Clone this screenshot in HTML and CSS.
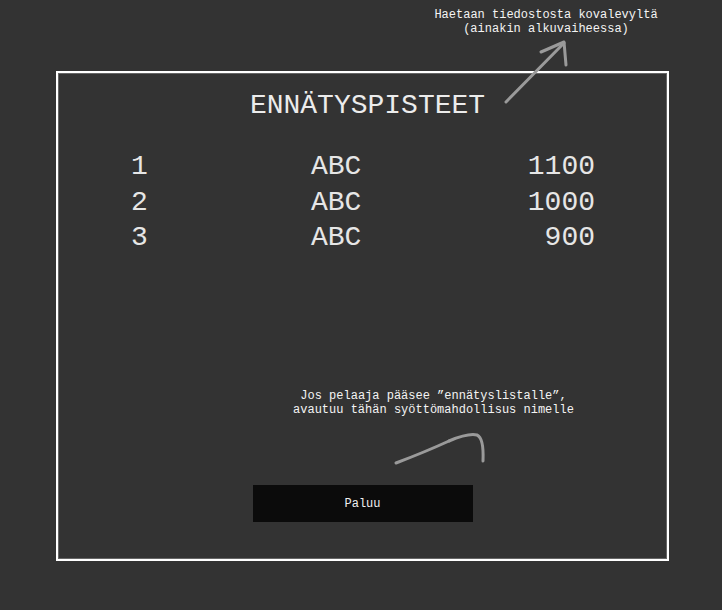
FILE: index.html
```html
<!DOCTYPE html>
<html lang="fi">
<head>
<meta charset="utf-8">
<title>Ennätyspisteet</title>
<link rel="stylesheet" href="styles.css">
</head>
<body>
<div class="page">
  <div class="top">
    <p class="note note-top">Haetaan tiedostosta kovalevyltä<br>(ainakin alkuvaiheessa)</p>
  </div>
  <main class="frame">
    <h1 class="title">ENNÄTYSPISTEET</h1>
    <div class="scores">
      <span class="rank">1</span><span class="name">ABC</span><span class="score">1100</span>
      <span class="rank">2</span><span class="name">ABC</span><span class="score">1000</span>
      <span class="rank">3</span><span class="name">ABC</span><span class="score">900</span>
    </div>
    <p class="note note-entry">Jos pelaaja pääsee ”ennätyslistalle”,<br>avautuu tähän syöttömahdollisus nimelle</p>
    <button class="back">Paluu</button>
  </main>
  <svg class="arrows" width="722" height="610" viewBox="0 0 722 610">
    <path d="M506 102 L564 43" />
    <path d="M541 52 L564 42 L566 65" />
    <path d="M396 463 Q425 452 449 441" />
    <path d="M449 441 Q468 433 477 435 Q484 438 483 461" />
  </svg>
</div>
</body>
</html>
```
FILE: styles.css
```css
html, body {
  margin: 0;
  padding: 0;
  background: #333333;
}
.page {
  position: relative;
  width: 722px;
  height: 610px;
  overflow: hidden;
  font-family: "Liberation Mono", "Courier New", monospace;
  color: #f2f2f2;
}
.top {
  height: 71px;
  box-sizing: border-box;
  padding-top: 8px;
  padding-left: 416px;
}
.note {
  margin: 0;
  font-size: 12px;
  line-height: 14px;
  text-align: center;
  color: #f4f4f4;
  white-space: nowrap;
}
.note-top {
  width: 260px;
}
.frame {
  margin-left: 56px;
  width: 613px;
  height: 490px;
  box-sizing: border-box;
  border: 2px solid #ffffff;
  box-shadow: inset 0 0 0 1px rgba(255,255,255,0.25);
  display: flex;
  flex-direction: column;
  align-items: center;
}
.title {
  margin: 16px 0 0 10px;
  font-weight: normal;
  font-size: 28px;
  line-height: 34px;
  color: #ececec;
}
.scores {
  margin-top: 26px;
  align-self: flex-start;
  margin-left: 73px;
  width: 464px;
  display: grid;
  grid-template-columns: 180px 1fr auto;
  font-size: 28px;
  line-height: 35.7px;
  color: #e6e6e6;
}
.score {
  text-align: right;
}
.note-entry {
  margin-top: 133px;
  margin-left: 142px;
}
.back {
  margin-top: 68px;
  width: 220px;
  height: 37px;
  border: none;
  background: #0b0b0b;
  color: #f0f0f0;
  font-family: "Liberation Mono", "Courier New", monospace;
  font-size: 12px;
  padding: 0;
}
.arrows {
  position: absolute;
  left: 0;
  top: 0;
  pointer-events: none;
}
.arrows path {
  fill: none;
  stroke: #9a9a9a;
  stroke-width: 3;
  stroke-linecap: round;
  stroke-linejoin: round;
}
```
